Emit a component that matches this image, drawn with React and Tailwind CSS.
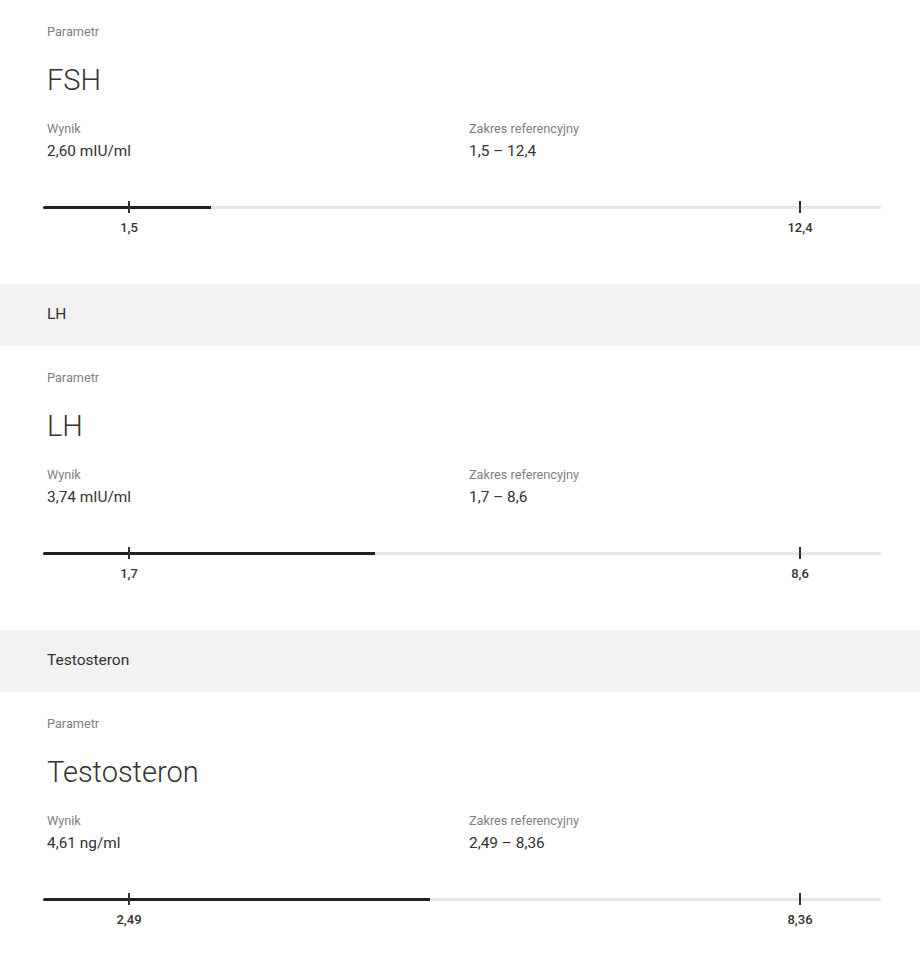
import React from 'react';

const results = [
  { name: 'FSH', value: '2,60 mIU/ml', low: '1,5', high: '12,4', fill: 168, header: null },
  { name: 'LH', value: '3,74 mIU/ml', low: '1,7', high: '8,6', fill: 332, header: 'LH' },
  { name: 'Testosteron', value: '4,61 ng/ml', low: '2,49', high: '8,36', fill: 387, header: 'Testosteron' },
];

const RangeBar = ({ fill, low, high }) => (
  <div className="ml-[43px] mr-[39px] mt-[39px]">
    <div className="relative flex h-[14px] items-center">
      <div className="h-[3px] shrink-0 rounded-l-full bg-[#222]" style={{ width: fill }} />
      <div className="h-[3px] flex-1 rounded-r-full bg-[#e6e6e6]" />
      {/* ticks for the reference range lie over the track */}
      <div className="absolute left-[85px] top-[1px] h-[12px] w-[2px] bg-[#333]" />
      <div className="absolute left-[756px] top-[1px] h-[12px] w-[2px] bg-[#333]" />
    </div>
    <div className="mt-[6px] ml-[66px] grid grid-cols-[40px_40px] gap-[631px] text-center text-[13px] leading-[16px] font-medium text-[#333]">
      <span>{low}</span>
      <span>{high}</span>
    </div>
  </div>
);

const ResultCard = ({ item }) => (
  <div className="pt-[24px] pb-[48px]">
    <div className="pl-[47px]">
      <p className="text-[12.7px] leading-[16px] text-[#808080]">Parametr</p>
      <h2 className="mt-[24px] text-[29px] leading-[32px] font-light text-[#333]">{item.name}</h2>
      <div className="mt-[25px] grid grid-cols-[422px_1fr]">
        <div>
          <p className="text-[12.7px] leading-[16px] text-[#808080]">Wynik</p>
          <p className="mt-[4px] text-[15.4px] leading-[20px] text-[#333]">{item.value}</p>
        </div>
        <div>
          <p className="text-[12.7px] leading-[16px] text-[#808080]">Zakres referencyjny</p>
          <p className="mt-[4px] text-[15.4px] leading-[20px] text-[#333]">
            {item.low} – {item.high}
          </p>
        </div>
      </div>
    </div>
    <RangeBar fill={item.fill} low={item.low} high={item.high} />
  </div>
);

export default function App() {
  return (
    <div className="min-h-screen bg-white font-['Roboto',sans-serif]">
      {results.map((item) => (
        <React.Fragment key={item.name}>
          {item.header && (
            <div className="flex h-[62px] items-center bg-[#f2f2f2] pl-[47px] text-[15.5px] text-[#333]">
              {item.header}
            </div>
          )}
          <ResultCard item={item} />
        </React.Fragment>
      ))}
    </div>
  );
}
